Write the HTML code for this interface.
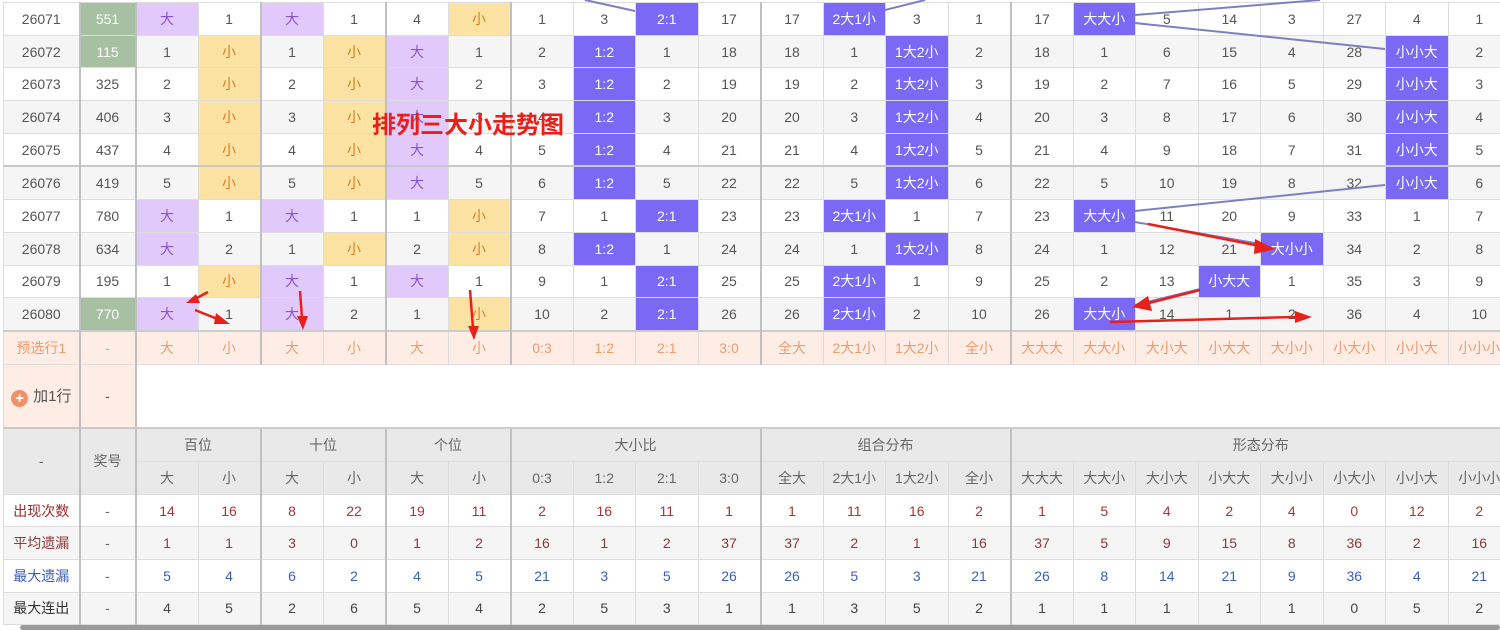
<!DOCTYPE html>
<html><head><meta charset="utf-8">
<style>
html,body{margin:0;padding:0;width:1500px;height:630px;overflow:hidden;background:#fff;position:relative;}
table{position:absolute;left:3px;border-collapse:collapse;table-layout:fixed;font-family:"Liberation Sans","Noto Sans CJK SC",sans-serif;font-size:14px;color:#555;}
td{border:1px solid #ddd;text-align:center;padding:0;height:31.7px;white-space:nowrap;overflow:hidden;}
tr.e td{background:#f5f5f5;}
td.b{border-left:2px solid #c0c0c0;}
tr.th td{border-top:2px solid #c8c8c8;}
.lp{background:#e2c9fb!important;color:#8a52cf;}
.y{background:#fde3a3!important;color:#e07b20;}
.p{background:#7b68f5!important;color:#fff;}
.g{background:#a7c0a1!important;color:#fff;}
tr.pre td{background:#fdede5;color:#f09a70;height:32px;border-top:2px solid #ccc;}
tr.add td{height:62px;}
tr.hd td{background:#e9e9e9;color:#666;height:32px;}
tr.st td{height:31.6px;}
.r1 td{color:#a83535;} .r2 td{color:#8b3a3a;} .r3 td{color:#3c5fb4;} .r4 td{color:#444;}
.r1 td:first-child{color:#9c2a2a;} .r3 td:first-child{color:#3b5db5;} .r4 td:first-child{color:#333;}
.r1 td:nth-child(2),.r2 td:nth-child(2),.r3 td:nth-child(2),.r4 td:nth-child(2){color:#666;}
</style></head><body>
<table style="top:2px;width:1507px;">
<colgroup><col style="width:76px"><col style="width:56px">
<col span="22" style="width:62.5px"></colgroup>
<tr><td>26071</td><td class="b g">551</td><td class="b lp">大</td><td>1</td><td class="b lp">大</td><td>1</td><td class="b">4</td><td class="y">小</td><td class="b">1</td><td>3</td><td class="p">2:1</td><td>17</td><td class="b">17</td><td class="p">2大1小</td><td>3</td><td>1</td><td class="b">17</td><td class="p">大大小</td><td>5</td><td>14</td><td>3</td><td>27</td><td>4</td><td>1</td></tr>
<tr class="e"><td>26072</td><td class="b g">115</td><td class="b">1</td><td class="y">小</td><td class="b">1</td><td class="y">小</td><td class="b lp">大</td><td>1</td><td class="b">2</td><td class="p">1:2</td><td>1</td><td>18</td><td class="b">18</td><td>1</td><td class="p">1大2小</td><td>2</td><td class="b">18</td><td>1</td><td>6</td><td>15</td><td>4</td><td>28</td><td class="p">小小大</td><td>2</td></tr>
<tr><td>26073</td><td class="b">325</td><td class="b">2</td><td class="y">小</td><td class="b">2</td><td class="y">小</td><td class="b lp">大</td><td>2</td><td class="b">3</td><td class="p">1:2</td><td>2</td><td>19</td><td class="b">19</td><td>2</td><td class="p">1大2小</td><td>3</td><td class="b">19</td><td>2</td><td>7</td><td>16</td><td>5</td><td>29</td><td class="p">小小大</td><td>3</td></tr>
<tr class="e"><td>26074</td><td class="b">406</td><td class="b">3</td><td class="y">小</td><td class="b">3</td><td class="y">小</td><td class="b lp">大</td><td>3</td><td class="b">4</td><td class="p">1:2</td><td>3</td><td>20</td><td class="b">20</td><td>3</td><td class="p">1大2小</td><td>4</td><td class="b">20</td><td>3</td><td>8</td><td>17</td><td>6</td><td>30</td><td class="p">小小大</td><td>4</td></tr>
<tr><td>26075</td><td class="b">437</td><td class="b">4</td><td class="y">小</td><td class="b">4</td><td class="y">小</td><td class="b lp">大</td><td>4</td><td class="b">5</td><td class="p">1:2</td><td>4</td><td>21</td><td class="b">21</td><td>4</td><td class="p">1大2小</td><td>5</td><td class="b">21</td><td>4</td><td>9</td><td>18</td><td>7</td><td>31</td><td class="p">小小大</td><td>5</td></tr>
<tr class="e th"><td>26076</td><td class="b">419</td><td class="b">5</td><td class="y">小</td><td class="b">5</td><td class="y">小</td><td class="b lp">大</td><td>5</td><td class="b">6</td><td class="p">1:2</td><td>5</td><td>22</td><td class="b">22</td><td>5</td><td class="p">1大2小</td><td>6</td><td class="b">22</td><td>5</td><td>10</td><td>19</td><td>8</td><td>32</td><td class="p">小小大</td><td>6</td></tr>
<tr><td>26077</td><td class="b">780</td><td class="b lp">大</td><td>1</td><td class="b lp">大</td><td>1</td><td class="b">1</td><td class="y">小</td><td class="b">7</td><td>1</td><td class="p">2:1</td><td>23</td><td class="b">23</td><td class="p">2大1小</td><td>1</td><td>7</td><td class="b">23</td><td class="p">大大小</td><td>11</td><td>20</td><td>9</td><td>33</td><td>1</td><td>7</td></tr>
<tr class="e"><td>26078</td><td class="b">634</td><td class="b lp">大</td><td>2</td><td class="b">1</td><td class="y">小</td><td class="b">2</td><td class="y">小</td><td class="b">8</td><td class="p">1:2</td><td>1</td><td>24</td><td class="b">24</td><td>1</td><td class="p">1大2小</td><td>8</td><td class="b">24</td><td>1</td><td>12</td><td>21</td><td class="p">大小小</td><td>34</td><td>2</td><td>8</td></tr>
<tr><td>26079</td><td class="b">195</td><td class="b">1</td><td class="y">小</td><td class="b lp">大</td><td>1</td><td class="b lp">大</td><td>1</td><td class="b">9</td><td>1</td><td class="p">2:1</td><td>25</td><td class="b">25</td><td class="p">2大1小</td><td>1</td><td>9</td><td class="b">25</td><td>2</td><td>13</td><td class="p">小大大</td><td>1</td><td>35</td><td>3</td><td>9</td></tr>
<tr class="e"><td>26080</td><td class="b g">770</td><td class="b lp">大</td><td>1</td><td class="b lp">大</td><td>2</td><td class="b">1</td><td class="y">小</td><td class="b">10</td><td>2</td><td class="p">2:1</td><td>26</td><td class="b">26</td><td class="p">2大1小</td><td>2</td><td>10</td><td class="b">26</td><td class="p">大大小</td><td>14</td><td>1</td><td>2</td><td>36</td><td>4</td><td>10</td></tr>
<tr class="pre"><td>预选行1</td><td class="b">-</td><td class="b">大</td><td>小</td><td class="b">大</td><td>小</td><td class="b">大</td><td>小</td><td class="b">0:3</td><td>1:2</td><td>2:1</td><td>3:0</td><td class="b">全大</td><td>2大1小</td><td>1大2小</td><td>全小</td><td class="b">大大大</td><td>大大小</td><td>大小大</td><td>小大大</td><td>大小小</td><td>小大小</td><td>小小大</td><td>小小小</td></tr>
<tr class="add"><td style="background:#fdede5;color:#555;font-size:15px;"><span style="display:inline-block;width:17px;height:17px;border-radius:50%;background:#f0916a;color:#fff;font-size:15px;line-height:17px;font-weight:bold;vertical-align:-2px;margin-right:5px;">+</span>加1行</td><td class="b" style="background:#fdede5;">-</td><td class="b" colspan="22" style="border-bottom:2px solid #ccc"></td></tr>
<tr class="hd th"><td rowspan="2">-</td><td rowspan="2" class="b">奖号</td><td class="b" colspan="2">百位</td><td class="b" colspan="2">十位</td><td class="b" colspan="2">个位</td><td class="b" colspan="4">大小比</td><td class="b" colspan="4">组合分布</td><td class="b" colspan="8">形态分布</td></tr>
<tr class="hd"><td class="b">大</td><td>小</td><td class="b">大</td><td>小</td><td class="b">大</td><td>小</td><td class="b">0:3</td><td>1:2</td><td>2:1</td><td>3:0</td><td class="b">全大</td><td>2大1小</td><td>1大2小</td><td>全小</td><td class="b">大大大</td><td>大大小</td><td>大小大</td><td>小大大</td><td>大小小</td><td>小大小</td><td>小小大</td><td>小小小</td></tr>
<tr class="st r1"><td>出现次数</td><td class="b">-</td><td class="b">14</td><td>16</td><td class="b">8</td><td>22</td><td class="b">19</td><td>11</td><td class="b">2</td><td>16</td><td>11</td><td>1</td><td class="b">1</td><td>11</td><td>16</td><td>2</td><td class="b">1</td><td>5</td><td>4</td><td>2</td><td>4</td><td>0</td><td>12</td><td>2</td></tr>
<tr class="st e r2"><td>平均遗漏</td><td class="b">-</td><td class="b">1</td><td>1</td><td class="b">3</td><td>0</td><td class="b">1</td><td>2</td><td class="b">16</td><td>1</td><td>2</td><td>37</td><td class="b">37</td><td>2</td><td>1</td><td>16</td><td class="b">37</td><td>5</td><td>9</td><td>15</td><td>8</td><td>36</td><td>2</td><td>16</td></tr>
<tr class="st r3"><td>最大遗漏</td><td class="b">-</td><td class="b">5</td><td>4</td><td class="b">6</td><td>2</td><td class="b">4</td><td>5</td><td class="b">21</td><td>3</td><td>5</td><td>26</td><td class="b">26</td><td>5</td><td>3</td><td>21</td><td class="b">26</td><td>8</td><td>14</td><td>21</td><td>9</td><td>36</td><td>4</td><td>21</td></tr>
<tr class="st e r4"><td>最大连出</td><td class="b">-</td><td class="b">4</td><td>5</td><td class="b">2</td><td>6</td><td class="b">5</td><td>4</td><td class="b">2</td><td>5</td><td>3</td><td>1</td><td class="b">1</td><td>3</td><td>5</td><td>2</td><td class="b">1</td><td>1</td><td>1</td><td>1</td><td>1</td><td>0</td><td>5</td><td>2</td></tr>
</table>
<div style="position:absolute;left:20px;top:625px;width:1480px;height:5px;background:#9a9a9a;border-radius:3px;"></div>
<svg width="1500" height="630" style="position:absolute;left:0;top:0" xmlns="http://www.w3.org/2000/svg">
<g stroke="#7f7fc0" stroke-width="2" fill="none">
<line x1="585" y1="0" x2="635" y2="11"/>
<line x1="885" y1="10" x2="925" y2="0"/>
<line x1="1135" y1="15" x2="1320" y2="0"/>
<line x1="1135" y1="23" x2="1385" y2="49"/>
<line x1="1385" y1="185" x2="1135" y2="211"/>
<line x1="1135" y1="222" x2="1260" y2="244"/>
<line x1="1200" y1="289" x2="1135" y2="305"/>
</g>
<g fill="#e8201c" stroke="#e8201c" stroke-width="2.5">
<line x1="1148" y1="224" x2="1260" y2="246"/><polygon points="1275,249 1255,239 1254,254" stroke="none"/>
<line x1="1200" y1="290" x2="1145" y2="304"/><polygon points="1132,307 1148,296 1152,311" stroke="none"/>
<line x1="1110" y1="322" x2="1295" y2="317"/><polygon points="1312,317 1295,311 1295,323" stroke="none"/>
<line x1="208" y1="292" x2="195" y2="299"/><polygon points="186,303 196,294 200,303" stroke="none"/>
<line x1="195" y1="310" x2="220" y2="320"/><polygon points="230,324 216,313 214,324" stroke="none"/>
<line x1="300" y1="291" x2="302" y2="318"/><polygon points="303,330 297,316 308,316" stroke="none"/>
<line x1="470" y1="290" x2="473" y2="328"/><polygon points="474,340 468,326 479,326" stroke="none"/>
</g>
</svg>
<div style="position:absolute;left:372px;top:105px;font-family:'Liberation Sans','Noto Sans CJK SC',sans-serif;font-weight:bold;font-size:24px;color:#e8201c;">排列三大小走势图</div>
</body></html>
